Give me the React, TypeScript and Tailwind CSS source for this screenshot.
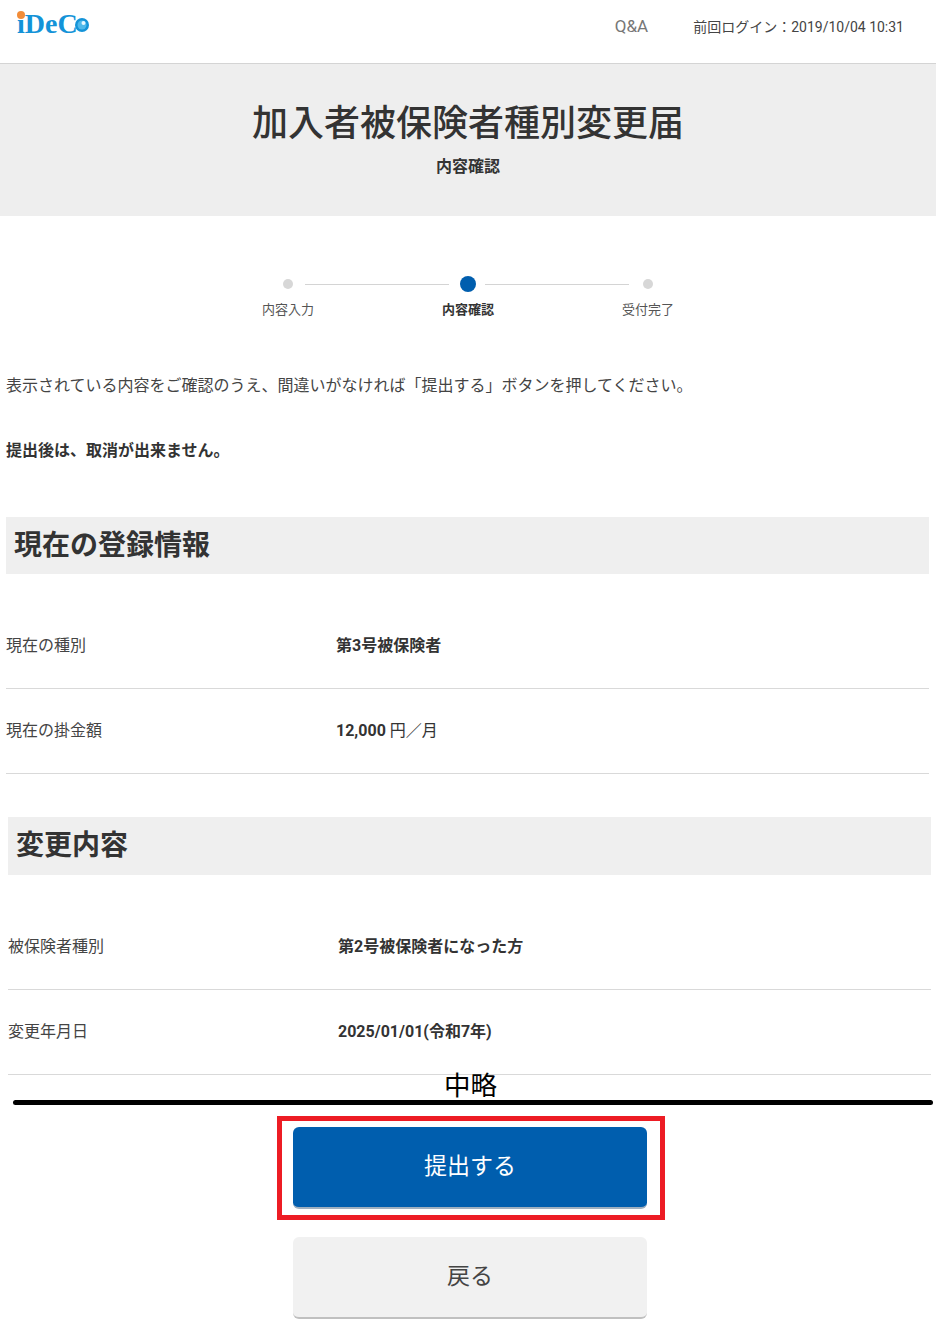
import React from 'react';

const font = '[font-family:Roboto,"Noto_Sans_CJK_JP",sans-serif]';

const Row: React.FC<{ label: string; children: React.ReactNode }> = ({ label, children }) => (
    <div className="flex items-center h-[85px] border-b border-[#d9d9d9]">
        <div className="w-[330px] text-[16px] text-[#444]">{label}</div>
        <div className="text-[16px] text-[#333]">{children}</div>
    </div>
);

const Step: React.FC<{ label: string; active?: boolean }> = ({ label, active }) => (
    <div className="w-[60px] flex flex-col items-center">
        <div className="h-[18px] flex items-center justify-center">
            <div className={active ? 'w-4 h-4 rounded-full bg-[#005eae]' : 'w-2.5 h-2.5 rounded-full bg-[#d7d7d7]'} />
        </div>
        <div className={`mt-[8px] text-[13px] leading-[18px] whitespace-nowrap ${active ? 'font-bold text-[#333]' : 'text-[#555]'}`}>{label}</div>
    </div>
);

const Logo = () => (
    <div className="relative w-[74px] h-[28px] mt-[11px] ml-[17px]">
        <div className="absolute left-0 top-[-1px] text-[28px] leading-[28px] font-bold text-[#1493d8] [font-family:'Liberation_Serif',serif]">
            iDeC
        </div>
        <span className="absolute left-0 top-0 w-2 h-2 rounded-full bg-[#f28c38]" />
        <svg className="absolute left-[58px] top-[7px]" width="14" height="14" viewBox="0 0 14 14">
            <circle cx="7" cy="7" r="7" fill="#1493d8" />
            <circle cx="7" cy="7" r="4.5" fill="#4fb8ea" />
            <circle cx="8.5" cy="5" r="2" fill="#e6f7ff" />
        </svg>
    </div>
);

const App: React.FC = () => (
    <div className={`w-[936px] h-[1335px] bg-white overflow-hidden ${font}`}>
        <header className="flex justify-between h-[64px] border-b border-[#d4d4d4]">
            <Logo />
            <div className="flex items-start pt-[17px] pr-[32px]">
                <span className="-mt-px text-[17px] leading-[20px] text-[#777]">Q&amp;A</span>
                <span className="ml-[45px] text-[14px] leading-[20px] text-[#444]">前回ログイン：2019/10/04 10:31</span>
            </div>
        </header>

        <div className="h-[152px] bg-[#eeeeee] flex flex-col items-center">
            <h1 className="mt-[37px] text-[36px] leading-[46px] font-medium text-[#333]">加入者被保険者種別変更届</h1>
            <p className="mt-[10px] text-[16px] leading-[20px] font-bold text-[#333]">内容確認</p>
        </div>

        <div className="mt-[59px] flex items-start pl-[258px]">
            <Step label="内容入力" />
            <div className="w-[144px] h-px bg-[#d4d4d4] mt-[9px] ml-[-13px] mr-[-11px]" />
            <Step label="内容確認" active />
            <div className="w-[144px] h-px bg-[#d4d4d4] mt-[9px] ml-[-13px] mr-[-11px]" />
            <Step label="受付完了" />
        </div>

        <div className="px-[6px]">
            <p className="mt-[55px] text-[16px] leading-[24px] text-[#444]">表示されている内容をご確認のうえ、間違いがなければ「提出する」ボタンを押してください。</p>
            <p className="mt-[41px] text-[16px] leading-[24px] font-bold text-[#333]">提出後は、取消が出来ません。</p>

            <h2 className="mt-[54px] w-[923px] h-[57px] bg-[#efefef] flex items-center pl-[8px] text-[28px] font-bold text-[#333]">現在の登録情報</h2>
            <div className="mt-[30px] w-[923px]">
                <Row label="現在の種別"><span className="font-bold">第3号被保険者</span></Row>
                <Row label="現在の掛金額"><span className="font-bold">12,000</span> 円／月</Row>
            </div>
        </div>

        <div className="pl-[8px]">
            <h2 className="mt-[43px] w-[923px] h-[58px] bg-[#efefef] flex items-center pl-[8px] text-[28px] font-bold text-[#333]">変更内容</h2>
            <div className="mt-[30px] w-[923px]">
                <Row label="被保険者種別"><span className="font-bold">第2号被保険者になった方</span></Row>
                <Row label="変更年月日"><span className="font-bold">2025/01/01(令和7年)</span></Row>
            </div>
        </div>

        <div className="relative h-[260px]">
            <div className="absolute left-[444px] top-[-5px] text-[26.5px] leading-[32px] text-black">中略</div>
            <div className="absolute left-[13px] top-[25px] w-[920px] h-[5px] bg-black rounded-full" />
            <div className="absolute left-[277px] top-[41px] w-[388px] h-[104px] border-[5px] border-[#ed1c24]" />
            <button className="absolute left-[293px] top-[52px] w-[354px] h-[82px] rounded-[6px] bg-[#005eae] border-b-2 border-[#9fb0c0] text-[23px] text-white">提出する</button>
            <button className="absolute left-[293px] top-[162px] w-[354px] h-[82px] rounded-[6px] bg-[#f1f1f1] border-b-2 border-[#c0c0c0] text-[23px] text-[#444]">戻る</button>
        </div>
    </div>
);

export default App;
